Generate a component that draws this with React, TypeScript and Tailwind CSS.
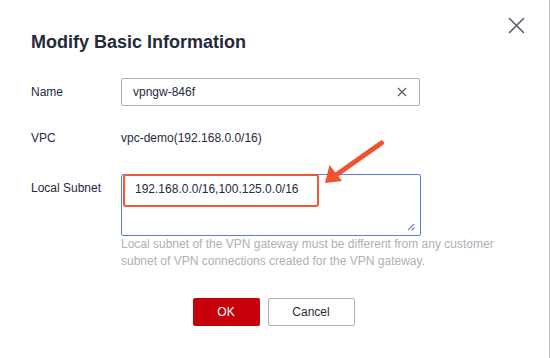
import { useState } from 'react';

export default function App() {
  const [name, setName] = useState('vpngw-846f');
  const [subnet, setSubnet] = useState('192.168.0.0/16,100.125.0.0/16');

  return (
    <div className="relative w-[550px] h-[358px] bg-white border-r border-[#c8c8c8] overflow-hidden font-['Liberation_Sans',Arial,sans-serif] text-[#252b3a]">
      {/* close */}
      <button type="button" aria-label="Close" className="absolute left-[508px] top-[17px] w-[17px] h-[17px] flex items-center justify-center">
        <svg width="17" height="17" viewBox="0 0 17 17" fill="none">
          <path d="M1.5 1.5L15.5 15.5M15.5 1.5L1.5 15.5" stroke="#575d6c" strokeWidth="1.6" strokeLinecap="round" />
        </svg>
      </button>

      <div className="pl-[31px] pt-[30px]">
        <h1 className="text-[18px] leading-[24px] font-bold">Modify Basic Information</h1>

        <div className="mt-[24px] flex items-center h-[28px]">
          <label className="w-[90px] text-[12px] leading-[18px]">Name</label>
          <div className="relative w-[299px] h-[28px]">
            <input
              value={name}
              onChange={(e) => setName(e.target.value)}
              className="w-full h-full border border-[#adb0b8] rounded-[2px] pl-[11px] pr-8 text-[12px] text-[#252b3a] outline-none font-['Liberation_Sans',Arial,sans-serif]"
            />
            <svg className="absolute left-[276px] top-[9px]" width="10" height="10" viewBox="0 0 10 10" fill="none">
              <path d="M1 1L9 9M9 1L1 9" stroke="#575d6c" strokeWidth="1.3" />
            </svg>
          </div>
        </div>

        <div className="mt-[22px] flex items-center h-[20px]">
          <span className="w-[90px] text-[12px] leading-[18px]">VPC</span>
          <span className="text-[12px] leading-[18px]">vpc-demo(192.168.0.0/16)</span>
        </div>

        <div className="mt-[26px] flex">
          <label className="w-[90px] pt-[5px] text-[12px] leading-[18px]">Local Subnet</label>
          <div className="w-[300px]">
            <div className="relative h-[62px]">
              <textarea
                value={subnet}
                onChange={(e) => setSubnet(e.target.value)}
                className="w-full h-full resize-none border border-[#5e7ce0] rounded-[2px] pl-[13px] pt-[5px] text-[12px] leading-[18px] text-[#252b3a] outline-none font-['Liberation_Sans',Arial,sans-serif]"
              />
              <div className="absolute left-[2px] top-0 w-[196px] h-[33px] border-2 border-[#ec5a3c] rounded-[3px] pointer-events-none" />
              <svg className="absolute left-[286px] top-[49px]" width="9" height="9" viewBox="0 0 9 9" fill="none">
                <path d="M1 7L7 1M4.5 7.5L7.5 4.5" stroke="#6b86d9" strokeWidth="1.2" />
              </svg>
            </div>
            <p className="text-[12px] leading-[17px] text-[#adb0b8] whitespace-nowrap">
              Local subnet of the VPN gateway must be different from any customer
              <br />
              subnet of VPN connections created for the VPN gateway.
            </p>
          </div>
        </div>
      </div>

      <div className="mt-[28px] flex justify-center gap-2 pr-[2px]">
        <button type="button" className="w-[67px] h-[28px] rounded-[2px] bg-[#c7000b] text-white text-[12px]">
          OK
        </button>
        <button type="button" className="w-[87px] h-[28px] rounded-[2px] border border-[#adb0b8] bg-white text-[#252b3a] text-[12px]">
          Cancel
        </button>
      </div>

      {/* annotation arrow */}
      <svg className="absolute left-[318px] top-[136px] pointer-events-none" width="72" height="54" viewBox="318 136 72 54">
        <line x1="381.5" y1="143" x2="336" y2="175" stroke="#ef5330" strokeWidth="5" strokeLinecap="round" />
        <polygon points="325,183 329.5,165 342,181" fill="#ef5330" />
      </svg>
    </div>
  );
}
